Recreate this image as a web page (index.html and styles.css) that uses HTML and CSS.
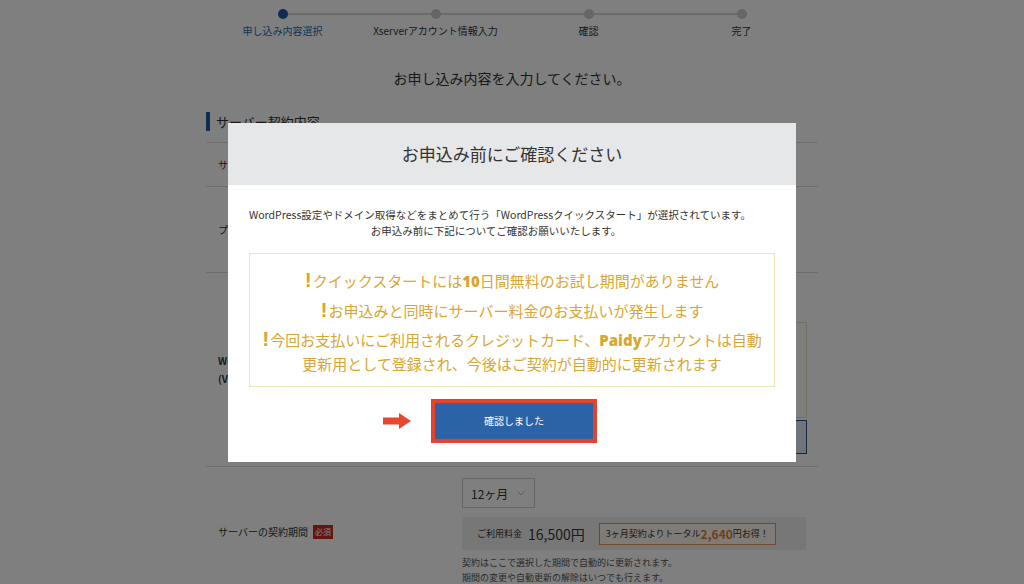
FILE: index.html
```html
<!DOCTYPE html>
<html lang="ja">
<head>
<meta charset="utf-8">
<title>お申し込み内容選択</title>
<link rel="stylesheet" href="styles.css">
</head>
<body>
<div class="container">
  <ol class="stepper">
    <li class="step active"><span class="dot"></span><span class="step-label">申し込み内容選択</span></li>
    <li class="step"><span class="dot"></span><span class="step-label">Xserverアカウント情報入力</span></li>
    <li class="step"><span class="dot"></span><span class="step-label">確認</span></li>
    <li class="step"><span class="dot"></span><span class="step-label">完了</span></li>
  </ol>
  <h1 class="page-title">お申し込み内容を入力してください。</h1>
  <h2 class="section-title">サーバー契約内容</h2>
  <div class="form">
    <div class="row row-id">
      <div class="label">サーバーID</div>
      <div class="value">xs000000</div>
    </div>
    <div class="row row-plan">
      <div class="label">プラン</div>
      <div class="value">スタンダード</div>
    </div>
    <div class="row row-wp">
      <div class="label label-bold">WordPressクイックスタート<br>(VPSは対象外)</div>
      <div class="value value-wp">
        <div class="qs-box"></div>
        <div class="qs-btn"></div>
      </div>
    </div>
    <div class="row row-term">
      <div class="label">サーバーの契約期間<span class="badge">必須</span></div>
      <div class="value value-term">
        <div class="select">
          <span>12ヶ月</span>
          <svg class="chev" width="8" height="5" viewBox="0 0 8 5"><polyline points="0.5,0.5 4,4 7.5,0.5" fill="none" stroke="#bbb" stroke-width="1"/></svg>
        </div>
        <div class="price">
          <span class="price-label">ご利用料金</span>
          <span class="price-num">16,500円</span>
          <span class="deal">3ヶ月契約よりトータル<b>2,640</b>円お得！</span>
        </div>
        <p class="note">契約はここで選択した期間で自動的に更新されます。<br>期間の変更や自動更新の解除はいつでも行えます。</p>
      </div>
    </div>
  </div>
</div>

<div class="overlay">
  <div class="modal">
    <div class="modal-head">お申込み前にご確認ください</div>
    <div class="modal-body">
      <p class="intro">WordPress設定やドメイン取得などをまとめて行う「WordPressクイックスタート」が選択されています。<br>お申込み前に下記についてご確認お願いいたします。</p>
      <div class="notice">
        <p><span class="excl">!</span>クイックスタートには<b>10</b>日間無料のお試し期間がありません</p>
        <p><span class="excl">!</span>お申込みと同時にサーバー料金のお支払いが発生します</p>
        <p><span class="excl">!</span>今回お支払いにご利用されるクレジットカード、<b>Paidy</b>アカウントは自動<br>更新用として登録され、今後はご契約が自動的に更新されます</p>
      </div>
      <div class="actions">
        <div class="confirm-wrap">
          <svg class="arrow" width="28" height="16" viewBox="0 0 28 16"><path d="M0 4.5H16V0L28 8L16 16V11.5H0Z" fill="#e8462f"/></svg>
          <button class="confirm">確認しました</button>
        </div>
      </div>
    </div>
  </div>
</div>
</body>
</html>
```
FILE: styles.css
```css
* { box-sizing: border-box; }
body {
  margin: 0;
  font-family: "Noto Sans CJK JP", "Noto Sans", sans-serif;
  color: #333;
  background: #fff;
}
.container { width: 612px; margin: 0 auto; }

.stepper {
  list-style: none;
  margin: 0;
  padding: 9px 0 0;
  display: grid;
  grid-template-columns: repeat(4, 1fr);
  position: relative;
}
.stepper::before {
  content: "";
  position: absolute;
  left: 76.5px;
  right: 76.5px;
  top: 13px;
  height: 2px;
  background: #d6d6d6;
}
.step { display: flex; flex-direction: column; align-items: center; position: relative; }
.dot { width: 10px; height: 10px; border-radius: 50%; background: #cdcdcd; }
.active .dot { background: #1e58aa; }
.step-label { margin-top: 5px; font-size: 10px; line-height: 14px; white-space: nowrap; }
.active .step-label { color: #2a64b3; }

.page-title {
  margin: 29px 0 0;
  font-size: 14px;
  font-weight: normal;
  line-height: 22px;
  text-align: center;
}
.section-title {
  margin: 23px 0 0;
  font-size: 13px;
  font-weight: normal;
  line-height: 19px;
  border-left: 4px solid #245aa0;
  padding-left: 6px;
}

.form { margin-top: 11px; }
.row {
  display: flex;
  align-items: center;
  border-top: 1px solid #dcdcdc;
  padding: 0 12px;
}
.label { width: 244px; font-size: 10px; line-height: 18px; display: flex; align-items: center; }
.label-bold { font-weight: bold; display: block; }
.value { width: 344px; font-size: 11px; }
.row-id { height: 44px; }
.row-plan { height: 86px; }
.value-wp { padding: 49px 0 12px; }
.qs-box { height: 96px; width: 345px; border: 1px solid #e4e1c8; background: #fdfdf8; }
.qs-btn { height: 34px; width: 345px; margin-top: 2px; border: 1px solid #2d4f80; background: #dfe9f6; }

.badge {
  margin-left: 5px;
  background: #c62a22;
  color: #fff;
  font-size: 8px;
  line-height: 14px;
  padding: 0 2px;
}
.value-term { padding: 11px 0 12px; }
.select {
  width: 73px;
  height: 30px;
  border: 1px solid #cfcfcf;
  display: flex;
  align-items: center;
  justify-content: space-between;
  padding: 0 9px 0 8px;
  font-size: 12px;
}
.price {
  margin-top: 9px;
  height: 33px;
  background: #efefef;
  display: flex;
  align-items: center;
  padding-left: 15px;
}
.price-label { font-size: 9px; }
.price-num { font-size: 14px; margin-left: 6px; }
.deal {
  margin-left: 14px;
  height: 22px;
  width: 177px;
  border: 1px solid #e0915a;
  background: #fff9f1;
  font-size: 9px;
  display: flex;
  align-items: center;
  padding-left: 6px;
}
.deal b { color: #e57c2c; font-size: 12px; }
.note { margin: 5px 0 0; font-size: 9px; line-height: 15px; color: #555; }

.overlay {
  position: fixed;
  inset: 0;
  background: rgba(0, 0, 0, 0.5);
  display: flex;
  align-items: center;
  justify-content: center;
}
.modal { width: 568px; height: 339px; background: #fff; }
.modal-head {
  height: 62px;
  background: #e6e7e9;
  display: flex;
  align-items: center;
  justify-content: center;
  font-size: 17px;
  color: #333;
}
.modal-body { padding: 22px 21px 19px; }
.intro {
  margin: 0;
  padding-right: 32px;
  font-size: 10.5px;
  line-height: 16px;
  text-align: center;
  color: #333;
  white-space: nowrap;
}
.notice {
  margin-top: 14px;
  height: 134px;
  border: 1px solid #ebe6b9;
  padding: 15px 8px 13px;
  text-align: center;
  color: #d8a632;
  font-size: 15px;
  line-height: 23px;
}
.notice p { margin: 0 0 6px; }
.notice p:last-child { margin-bottom: 0; }
.notice b { font-family: "Open Sans", "Noto Sans", sans-serif; font-weight: 800; }
.excl {
  font-family: "Liberation Sans", sans-serif;
  font-weight: bold;
  font-size: 21px;
  margin-right: 1px;
  line-height: 0;
}
.actions { margin-top: 12px; display: flex; justify-content: center; }
.confirm-wrap { position: relative; margin-left: 4px; }
.arrow { position: absolute; left: -48px; top: 14px; }
.confirm {
  display: block;
  width: 166px;
  height: 44px;
  border: 4px solid #e6432e;
  background: #2c62a6;
  color: #fff;
  font-family: "Noto Sans CJK JP", sans-serif;
  font-size: 10px;
}
```
